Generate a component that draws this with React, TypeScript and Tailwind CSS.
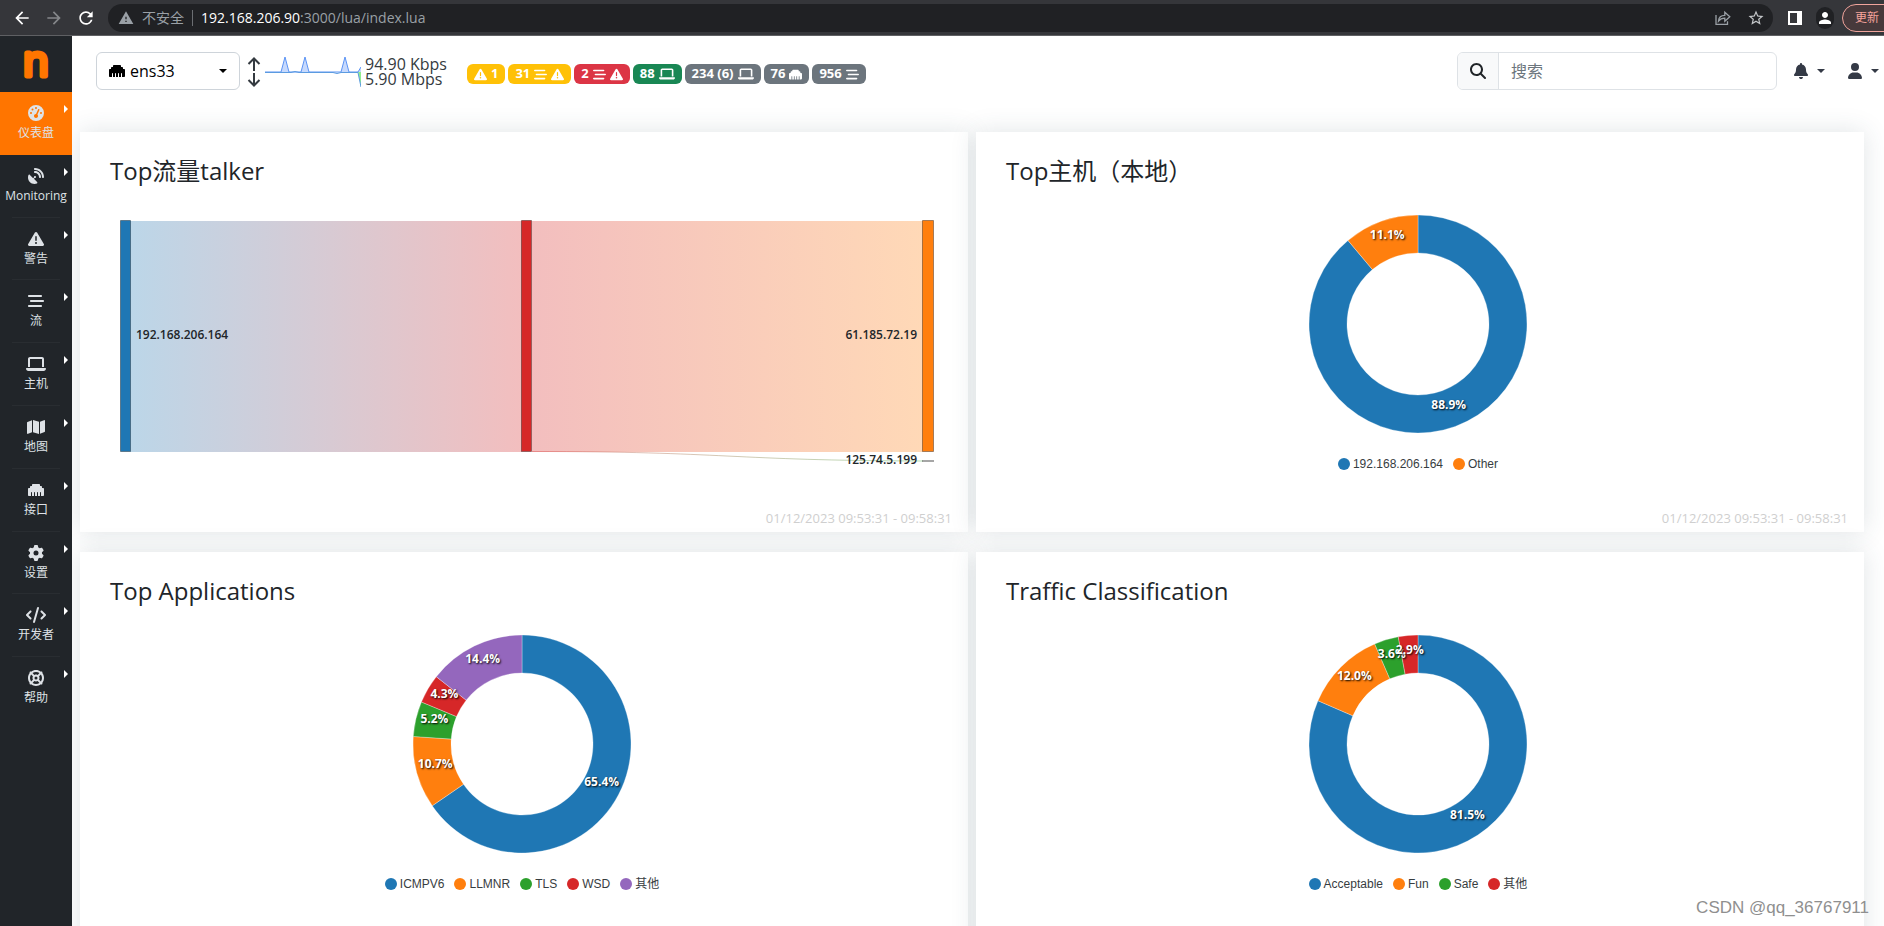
import React from 'react';
import type { IconType } from 'react-icons';
import {
  FaBarsStaggered,
  FaBell,
  FaCode,
  FaEthernet,
  FaGaugeHigh,
  FaGear,
  FaLaptop,
  FaLifeRing,
  FaMagnifyingGlass,
  FaMap,
  FaSatelliteDish,
  FaTriangleExclamation,
  FaUser,
} from 'react-icons/fa6';
import {
  MdArrowBack,
  MdArrowForward,
  MdPerson,
  MdRefresh,
  MdStarBorder,
  MdWarning,
} from 'react-icons/md';

const BLUE = '#1f77b4';
const ORANGE = '#ff7f0e';
const GREEN = '#2ca02c';
const RED = '#d62728';
const PURPLE = '#9467bd';

type Slice = { label: string; value: number; color: string };

const menu: { label: string; icon: IconType; size: number }[] = [
  { label: '仪表盘', icon: FaGaugeHigh, size: 16 },
  { label: 'Monitoring', icon: FaSatelliteDish, size: 16 },
  { label: '警告', icon: FaTriangleExclamation, size: 16 },
  { label: '流', icon: FaBarsStaggered, size: 16 },
  { label: '主机', icon: FaLaptop, size: 20 },
  { label: '地图', icon: FaMap, size: 18 },
  { label: '接口', icon: FaEthernet, size: 16 },
  { label: '设置', icon: FaGear, size: 16 },
  { label: '开发者', icon: FaCode, size: 20 },
  { label: '帮助', icon: FaLifeRing, size: 16 },
];

const hosts: Slice[] = [
  { label: '192.168.206.164', value: 88.9, color: BLUE },
  { label: 'Other', value: 11.1, color: ORANGE },
];

const applications: Slice[] = [
  { label: 'ICMPV6', value: 65.4, color: BLUE },
  { label: 'LLMNR', value: 10.7, color: ORANGE },
  { label: 'TLS', value: 5.2, color: GREEN },
  { label: 'WSD', value: 4.3, color: RED },
  { label: '其他', value: 14.4, color: PURPLE },
];

const traffic: Slice[] = [
  { label: 'Acceptable', value: 81.5, color: BLUE },
  { label: 'Fun', value: 12.0, color: ORANGE },
  { label: 'Safe', value: 3.6, color: GREEN },
  { label: '其他', value: 2.9, color: RED },
];

const BrowserBar = (): React.ReactElement => {
  return (
    <div className="flex h-9 shrink-0 items-center overflow-hidden border-b border-[#5f6063] bg-[#35363a] text-[#9aa0a6]">
      <div className="flex w-[108px] shrink-0 items-center gap-3 pl-3">
        <button type="button" aria-label="后退" className="text-white">
          <MdArrowBack size={20} />
        </button>
        <button type="button" aria-label="前进" className="text-[#85878a]">
          <MdArrowForward size={20} />
        </button>
        <button type="button" aria-label="刷新" className="text-white">
          <MdRefresh size={20} />
        </button>
      </div>
      <div className="flex h-7 flex-1 items-center rounded-full bg-[#202124] pr-2 pl-2.5 text-sm">
        <MdWarning size={16} />
        <span className="ml-2">不安全</span>
        <span className="mx-2 h-4 w-px bg-[#6b6e72]" />
        <span className="flex-1">
          <span className="text-white">192.168.206.90</span>:3000/lua/index.lua
        </span>
        <button type="button" aria-label="分享" className="mr-4">
          <svg width="16" height="16" viewBox="0 0 16 16" fill="none" stroke="currentColor" strokeWidth="1.3">
            <path d="M1 5v9.3h11.5v-3" />
            <path d="M3.5 11c.3-3.600 2.500-5.600 6.300-5.600V2.200l5 4.500-5 4.500V8.200C7.200 8.200 5 9 3.500 11z" />
          </svg>
        </button>
        <button type="button" aria-label="收藏" className="text-[#c4c7ca]">
          <MdStarBorder size={18} />
        </button>
      </div>
      <div className="flex w-[111px] shrink-0 items-center pl-[15px]">
        <button type="button" aria-label="侧边栏" className="text-white">
          <svg width="14" height="14" viewBox="0 0 14 14" fill="none" stroke="currentColor">
            <path d="M1 1h12v12H1z" strokeWidth="2" />
            <path d="M11 1v12" strokeWidth="4" />
          </svg>
        </button>
        <button
          type="button"
          aria-label="用户"
          className="ml-3.5 flex size-[22px] items-center justify-center rounded-full bg-[#202124] text-white"
        >
          <MdPerson size={18} />
        </button>
        <button
          type="button"
          className="ml-2 h-7 w-16 shrink-0 rounded-full border border-[#f0a49c] bg-[#47393b] pl-3 text-left text-xs text-[#f5a39b]"
        >
          更新
        </button>
      </div>
    </div>
  );
};

const Sidebar = (): React.ReactElement => {
  return (
    <nav className="w-[72px] shrink-0 bg-[#212529] text-[#dee2e6]">
      <a href="#home" aria-label="ntopng" className="flex h-14 items-center justify-center">
        <svg width="40" height="56" viewBox="0 0 40 56" className="overflow-visible">
          <text
            x="20"
            y="39.500"
            textAnchor="middle"
            fill="#ff7500"
            stroke="#ff7500"
            strokeWidth="5"
            strokeLinejoin="round"
            className="text-[42px] font-medium"
          >
            n
          </text>
        </svg>
      </a>
      <ul className="grid h-[628px] grid-rows-10">
        {menu.map(({ label, icon: Icon, size }, i) => (
          <li key={label} className={i === 0 ? 'bg-[#ff7500]' : ''}>
            <a href={`#${label}`} className="relative flex h-full flex-col items-center pt-[13px]">
              <span className="flex h-4 items-center">
                <Icon size={size} />
              </span>
              <span className="mt-1 text-xs leading-4 whitespace-nowrap">{label}</span>
              <span className="absolute top-[13px] right-1 border-y-4 border-l-4 border-y-transparent border-l-white" />
              <span
                className={
                  i === 0 || i === menu.length - 1
                    ? 'hidden'
                    : 'absolute inset-x-3 bottom-0 h-px bg-[#292d31]'
                }
              />
            </a>
          </li>
        ))}
      </ul>
    </nav>
  );
};

const Caret = (): React.ReactElement => (
  <span className="border-x-4 border-t-4 border-x-transparent border-t-current" />
);

const StatusBadge = ({
  tone,
  children,
}: {
  tone: 'warning' | 'danger' | 'success' | 'secondary';
  children: React.ReactNode;
}): React.ReactElement => {
  const tones = {
    warning: 'bg-[#ffc107]',
    danger: 'bg-[#dc3545]',
    success: 'bg-[#198754]',
    secondary: 'bg-[#6c757d]',
  };
  return (
    <a
      href="#status"
      className={`flex h-5 items-center gap-1 rounded-md px-[7px] text-[13px] font-bold text-white ${tones[tone]}`}
    >
      {children}
    </a>
  );
};

const Throughput = (): React.ReactElement => {
  return (
    <div className="flex items-center text-[#343a40]">
      <svg width="14" height="30" viewBox="0 0 14 30" fill="none" stroke="currentColor" strokeWidth="2">
        <path d="M7 14V2M1.500 7L7 1.500 12.500 7M7 16v12M1.500 23L7 28.500 12.500 23" />
      </svg>
      <svg width="96" height="34" viewBox="0 0 96 34" className="ml-1">
        <path d="M93 17h3v15z" fill="#90ee90" />
        <path d="M16 17L20 2l4 15zM36 17L40 2l4 15zM76 17L80 2l4 15zM93 17l3-5v5z" fill="#c6d9fd" />
        <path d="M0 17h16L20 2l4 15h12L40 2l4 15h32L80 2l4 15h9l3-5" fill="none" stroke="#5b93f5" />
        <path d="M0 17.500h26l4-1 4 1h34l4 1 4-1h17L96 32" fill="none" stroke="#5b9be0" />
      </svg>
      <div className="ml-1 text-base leading-[15px] whitespace-nowrap">
        <div>94.90 Kbps</div>
        <div>5.90 Mbps</div>
      </div>
    </div>
  );
};

const Header = (): React.ReactElement => {
  return (
    <header className="flex items-start pt-4 pl-6">
      <label className="relative flex h-[38px] w-36 items-center rounded-md border border-[#ced4da] text-black">
        <FaEthernet size={16} className="absolute left-3" />
        <select
          aria-label="接口"
          className="h-full w-full appearance-none bg-transparent pl-[33px] text-base"
        >
          <option>ens33</option>
        </select>
        <span className="absolute right-3 flex">
          <Caret />
        </span>
      </label>
      <div className="ml-[7px] flex h-10 items-center">
        <Throughput />
      </div>
      <div className="ml-5 flex h-11 items-center gap-[3px]">
        <StatusBadge tone="warning">
          <FaTriangleExclamation /> 1
        </StatusBadge>
        <StatusBadge tone="warning">
          31 <FaBarsStaggered /> <FaTriangleExclamation />
        </StatusBadge>
        <StatusBadge tone="danger">
          2 <FaBarsStaggered /> <FaTriangleExclamation />
        </StatusBadge>
        <StatusBadge tone="success">
          88 <FaLaptop size={16} />
        </StatusBadge>
        <StatusBadge tone="secondary">
          234 (6) <FaLaptop size={16} />
        </StatusBadge>
        <StatusBadge tone="secondary">
          76 <FaEthernet />
        </StatusBadge>
        <StatusBadge tone="secondary">
          956 <FaBarsStaggered />
        </StatusBadge>
      </div>
      <div className="ml-auto flex h-[38px] w-80 overflow-hidden rounded-md border border-[#dee2e6]">
        <label
          htmlFor="search"
          className="flex w-[41px] shrink-0 items-center justify-center border-r border-[#dee2e6] bg-[#f8f9fa]"
        >
          <FaMagnifyingGlass size={16} />
        </label>
        <input
          id="search"
          type="text"
          placeholder="搜索"
          className="min-w-0 flex-1 px-3 text-base placeholder:text-[#6c757d]"
        />
      </div>
      <div className="flex h-[38px] items-center gap-[22px] pr-[5px] pl-4 text-[#343a46]">
        <button type="button" aria-label="通知" className="flex items-center gap-2">
          <FaBell size={16} />
          <Caret />
        </button>
        <button type="button" aria-label="账户" className="flex items-center gap-2">
          <FaUser size={16} />
          <Caret />
        </button>
      </div>
    </header>
  );
};

const Card = ({
  title,
  range,
  children,
}: {
  title: string;
  range?: string;
  children: React.ReactNode;
}): React.ReactElement => {
  return (
    <section className="flex h-[400px] flex-col bg-white pt-5 shadow-[0_0_24px_rgba(45,75,85,0.15)]">
      <h2 className="px-[30px] text-2xl leading-[38px]">{title}</h2>
      {children}
      {range && (
        <p className="mt-auto pr-4 pb-1.5 text-right text-[13px] leading-4 text-[#cfcfcf]">{range}</p>
      )}
    </section>
  );
};

const Sankey = (): React.ReactElement => {
  return (
    <svg viewBox="0 0 888 260" className="mt-6 w-full text-xs">
      <defs>
        <linearGradient id="toRed">
          <stop offset="0" stopColor={BLUE} />
          <stop offset="1" stopColor={RED} />
        </linearGradient>
        <linearGradient id="toOrange">
          <stop offset="0" stopColor={RED} />
          <stop offset="1" stopColor={ORANGE} />
        </linearGradient>
        <linearGradient id="toGreen">
          <stop offset="0" stopColor={RED} />
          <stop offset="1" stopColor={GREEN} />
        </linearGradient>
      </defs>
      <path d="M50 7h392v231H50z" fill="url(#toRed)" opacity="0.3" />
      <path d="M452 7h391v231H452z" fill="url(#toOrange)" opacity="0.3" />
      <path d="M452 237.500C648 237.500 648 246.500 843 247" fill="none" stroke="url(#toGreen)" opacity="0.35" />
      <g stroke="#000" strokeOpacity="0.35">
        <path d="M40.500 6.500h10v231h-10z" fill={BLUE} />
        <path d="M441.500 6.500h10v231h-10z" fill={RED} />
        <path d="M842.500 6.500h11v231h-11z" fill={ORANGE} />
        <path d="M842 247h12" strokeWidth="2" />
      </g>
      <g fill="#212529" className="font-semibold">
        <text x="56" y="125">192.168.206.164</text>
        <text x="837" y="125" textAnchor="end">61.185.72.19</text>
        <text x="837" y="250" textAnchor="end">125.74.5.199</text>
      </g>
    </svg>
  );
};

const Donut = ({ slices }: { slices: Slice[] }): React.ReactElement => {
  const outer = 109;
  const inner = 71;
  const total = slices.reduce((sum, s) => sum + s.value, 0);
  const point = (r: number, turn: number) =>
    [r * Math.sin(turn * 2 * Math.PI), -r * Math.cos(turn * 2 * Math.PI)];

  let turn = 0;
  const arcs = slices.map((s) => {
    const start = turn;
    turn += s.value / total;
    const large = turn - start > 0.5 ? 1 : 0;
    return {
      ...s,
      path: `M${point(outer, start)}A${outer} ${outer} 0 ${large} 1 ${point(outer, turn)}L${point(inner, turn)}A${inner} ${inner} 0 ${large} 0 ${point(inner, start)}Z`,
      center: point((outer + inner) / 2, (start + turn) / 2),
    };
  });

  return (
    <div className="mt-6 flex flex-col items-center pr-1">
      <svg width="220" height="220" viewBox="-110 -110 220 220" className="overflow-visible">
        {arcs.map((a) => (
          <path key={a.label} d={a.path} fill={a.color} stroke="#fff" strokeWidth="0.3" />
        ))}
        {arcs.map((a) => (
          <text
            key={a.label}
            x={a.center[0]}
            y={a.center[1]}
            textAnchor="middle"
            fill="#fff"
            className="text-xs font-bold [text-shadow:1px_1px_2px_#000]"
          >
            {a.value.toFixed(1)}%
          </text>
        ))}
      </svg>
      <ul className="mt-5 flex h-5 items-center gap-2.5 font-['Liberation_Sans','Noto_Sans_CJK_SC',sans-serif] text-xs text-[#373d3f]">
        {slices.map((s) => (
          <li key={s.label} className="flex items-center gap-[3px]">
            <span className="size-3 rounded-full" style={{ backgroundColor: s.color }} />
            {s.label}
          </li>
        ))}
      </ul>
    </div>
  );
};

const App = (): React.ReactElement => {
  return (
    <div className="relative flex h-screen flex-col overflow-hidden bg-white font-['Open_Sans','Noto_Sans_CJK_SC',sans-serif] text-[#212529]">
      <BrowserBar />
      <div className="flex min-h-0 flex-1">
        <Sidebar />
        <main className="min-w-0 flex-1 overflow-hidden">
          <Header />
          <div className="mt-9 grid grid-cols-2 gap-x-2 gap-y-5 pr-5 pl-2">
            <Card title="Top流量talker" range="01/12/2023 09:53:31 - 09:58:31">
              <Sankey />
            </Card>
            <Card title="Top主机（本地）" range="01/12/2023 09:53:31 - 09:58:31">
              <Donut slices={hosts} />
            </Card>
            <Card title="Top Applications">
              <Donut slices={applications} />
            </Card>
            <Card title="Traffic Classification">
              <Donut slices={traffic} />
            </Card>
          </div>
        </main>
      </div>
      <p className="absolute right-[15px] bottom-1.5 font-['Liberation_Sans',sans-serif] text-[17px] leading-6 text-[#8f8f8f]">
        CSDN @qq_36767911
      </p>
    </div>
  );
};

export default App;
